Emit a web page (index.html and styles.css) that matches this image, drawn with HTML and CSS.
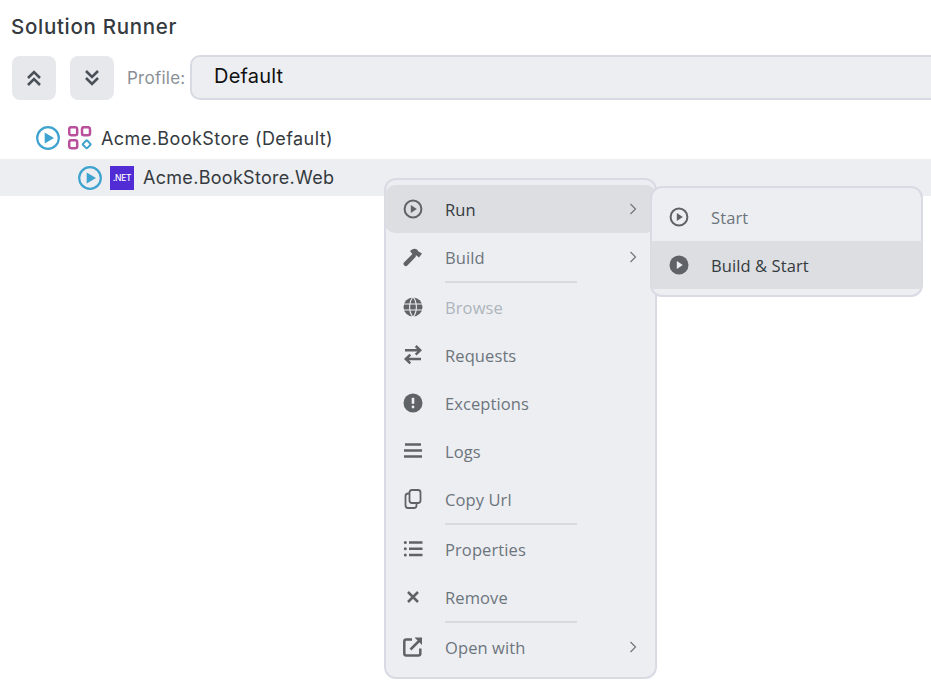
FILE: index.html
```html
<!DOCTYPE html>
<html lang="en">

<head>
    <meta charset="UTF-8">
    <meta name="viewport" content="width=device-width, initial-scale=1.0">
    <title>Solution Runner</title>
    <link rel="stylesheet" href="styles.css">
</head>

<body>

    <h1 class="title">Solution Runner</h1>

    <!-- Toolbar -->
    <div class="toolbar">
        <button class="tool-btn">
            <svg width="16" height="16" viewBox="0 0 16 16"><path d="M2 8 8 2 14 8M2 15 8 9 14 15"/></svg>
        </button>
        <button class="tool-btn">
            <svg width="16" height="16" viewBox="0 0 16 16"><path d="M2 1 8 7 14 1M2 8 8 14 14 8"/></svg>
        </button>
        <span class="profile-label">Profile:</span>
        <div class="profile-select">Default</div>
    </div>

    <!-- Tree -->
    <div class="tree">
        <div class="tree-row root">
            <svg class="run-icon" width="24" height="24" viewBox="0 0 24 24"><circle cx="12" cy="12" r="10.8"/><path d="M8.700 6.500v11L18 12z"/></svg>
            <svg class="solution-icon" width="24" height="24" viewBox="0 0 24 24">
                <rect x="1.200" y="1.200" width="8" height="8" rx="2"/>
                <rect x="14" y="1.200" width="8" height="8" rx="2"/>
                <rect x="1.200" y="14.300" width="8" height="8" rx="2"/>
                <rect class="diamond" x="15.700" y="15.300" width="6" height="6" rx="1" transform="rotate(45 18.700 18.300)"/>
            </svg>
            <span>Acme.BookStore (Default)</span>
        </div>
        <div class="tree-row child">
            <svg class="run-icon" width="24" height="24" viewBox="0 0 24 24"><circle cx="12" cy="12" r="10.8"/><path d="M8.700 6.500v11L18 12z"/></svg>
            <span class="net-badge">.NET</span>
            <span>Acme.BookStore.Web</span>
        </div>
    </div>

    <!-- Context menu -->
    <div class="menu main-menu">
        <div class="menu-item active">
            <svg class="icon" viewBox="0 0 20 20"><circle class="ring" cx="10" cy="10" r="8.400"/><path d="M7.800 6v8l6-4z"/></svg>
            <span class="label">Run</span>
            <svg class="arrow" viewBox="0 0 8 14"><path d="M1.500 2 6.500 7 1.500 12"/></svg>
        </div>
        <div class="menu-item">
            <svg class="icon" viewBox="0 0 20 20">
                <path class="handle" d="M2.800 16.800 10.500 9"/>
                <path d="M7 4Q11 .5 14 2.500L15.500 4.500 19 6.500 16 10.500 13.500 8.500H11L8.500 6z"/>
            </svg>
            <span class="label">Build</span>
            <svg class="arrow" viewBox="0 0 8 14"><path d="M1.500 2 6.500 7 1.500 12"/></svg>
        </div>
        <div class="separator"></div>
        <div class="menu-item disabled">
            <svg class="icon" viewBox="0 0 20 20">
                <circle cx="10" cy="10" r="9.500"/>
                <path class="globe-cut" d="M0 7h20M0 13h20M10 0C5.500 5 5.500 15 10 20M10 0C14.500 5 14.500 15 10 20"/>
            </svg>
            <span class="label">Browse</span>
        </div>
        <div class="menu-item">
            <svg class="icon" viewBox="0 0 20 20"><path class="line" d="M2 5.300h15M12.700 1l4.500 4.300-4.500 4.300M18 14H3M7.300 9.700 2.800 14l4.500 4.300"/></svg>
            <span class="label">Requests</span>
        </div>
        <div class="menu-item">
            <svg class="icon" viewBox="0 0 20 20">
                <circle cx="10" cy="10" r="9.500"/>
                <path class="mark-cut" d="M10 4.800v6"/>
                <circle class="dot" cx="10" cy="14" r="1.400"/>
            </svg>
            <span class="label">Exceptions</span>
        </div>
        <div class="menu-item">
            <svg class="icon" viewBox="0 0 20 20"><path class="line" d="M2 3.500h16M1 9.500h18M1 15.500h18"/></svg>
            <span class="label">Logs</span>
        </div>
        <div class="menu-item">
            <svg class="icon" viewBox="0 0 20 20">
                <path class="thin" d="M6.500 3.500Q6.500 1 9 1h6Q17.500 1 17.500 3.500v8Q17.500 14 15 14H9Q6.500 14 6.500 11.500z"/>
                <path class="thin" d="M6.500 4.500H5Q2.500 4.500 2.500 7v9Q2.500 19 5 19h6Q13.500 19 13.500 16.500V14"/>
            </svg>
            <span class="label">Copy Url</span>
        </div>
        <div class="separator"></div>
        <div class="menu-item">
            <svg class="icon" viewBox="0 0 20 20">
                <path class="line" d="M6 3.500H19.500M6 9.700H19.500M6 16H19.500"/>
                <circle cx="2.300" cy="3.500" r="1.500"/><circle cx="2.300" cy="9.700" r="1.500"/><circle cx="2.300" cy="16" r="1.500"/>
            </svg>
            <span class="label">Properties</span>
        </div>
        <div class="menu-item">
            <svg class="icon" viewBox="0 0 20 20"><path class="line" d="M5 5l10 10M15 5 5 15"/></svg>
            <span class="label">Remove</span>
        </div>
        <div class="separator"></div>
        <div class="menu-item">
            <svg class="icon" viewBox="0 0 20 20">
                <path class="line" d="M9 2.500H3.300Q1.300 2.500 1.300 4.500V16.500Q1.300 18.500 3.300 18.500H15.300Q17.300 18.500 17.300 16.500V11.500"/>
                <path class="line" d="M7.500 12.500 16 4"/>
                <path d="M11.500 .5H19V8z"/>
            </svg>
            <span class="label">Open with</span>
            <svg class="arrow" viewBox="0 0 8 14"><path d="M1.500 2 6.500 7 1.500 12"/></svg>
        </div>
    </div>

    <!-- Run submenu -->
    <div class="menu sub-menu">
        <div class="menu-item">
            <svg class="icon" viewBox="0 0 20 20"><circle class="ring" cx="10" cy="10" r="8.400"/><path d="M7.800 6v8l6-4z"/></svg>
            <span class="label">Start</span>
        </div>
        <div class="menu-item active square">
            <svg class="icon" viewBox="0 0 20 20"><circle cx="10" cy="10" r="9.500"/><path class="play-cut" d="M7.800 6v8l6-4z"/></svg>
            <span class="label">Build &amp; Start</span>
        </div>
    </div>

</body>

</html>
```

FILE: styles.css
```css
html, body {
    height: 100%;
}

body {
    margin: 0;
    background: #fff;
    overflow: hidden;
    font-family: "Inter", "Liberation Sans", sans-serif;
    color: #343a40;
}

.title {
    margin: 0;
    padding: 15px 0 0 11px;
    height: 41px;
    box-sizing: border-box;
    font-size: 20.500px;
    line-height: 24px;
    font-weight: 500;
    letter-spacing: .7px;
}

/* Toolbar */
.toolbar {
    display: flex;
    align-items: center;
    padding-left: 12px;
    margin-top: 14px;
    height: 45px;
}

.tool-btn {
    display: flex;
    align-items: center;
    justify-content: center;
    width: 44px;
    height: 44px;
    margin-right: 14px;
    padding: 0;
    border: 0;
    border-radius: 8px;
    background: #e7e8eb;
}

.tool-btn:nth-child(2) {
    margin-right: 13px;
}

.tool-btn path {
    fill: none;
    stroke: #495057;
    stroke-width: 2.600;
}

.profile-label {
    width: 63px;
    font-size: 17px;
    letter-spacing: .25px;
    color: #8b9096;
}

.profile-select {
    flex: 1;
    height: 45px;
    box-sizing: border-box;
    margin-right: -20px;
    padding-left: 22px;
    border: 2px solid #d8dae3;
    border-radius: 10px;
    background: #edeef1;
    font-size: 20px;
    letter-spacing: .2px;
    line-height: 39px;
    color: #111;
}

/* Tree */
.tree {
    margin-top: 17px;
    font-size: 18px;
}

.tree-row {
    display: flex;
    align-items: center;
}

.root {
    height: 42px;
    padding-left: 36px;
    letter-spacing: .43px;
}

.child {
    height: 37px;
    padding-left: 78px;
    background: #edeef1;
    letter-spacing: .3px;
}

.run-icon circle {
    fill: none;
    stroke: #3fa3cf;
    stroke-width: 2.200;
}

.run-icon path {
    fill: #3fa3cf;
}

.solution-icon {
    margin-left: 8px;
    margin-right: 9px;
}

.solution-icon rect {
    fill: none;
    stroke: #b8509c;
    stroke-width: 2.500;
}

.solution-icon .diamond {
    stroke: #3fa3cf;
    stroke-width: 2;
}

.net-badge {
    display: flex;
    align-items: center;
    justify-content: center;
    width: 24px;
    height: 24px;
    margin-left: 8px;
    margin-right: 9px;
    background: #512bd4;
    color: #fff;
    font-size: 8.500px;
    font-weight: 500;
    letter-spacing: -.3px;
}

/* Menus */
.menu {
    position: absolute;
    box-sizing: border-box;
    width: 273px;
    border: 2px solid #d9dae3;
    border-radius: 12px;
    background: #edeef1;
    font-family: "Open Sans", "Noto Sans", sans-serif;
    font-size: 16.500px;
    letter-spacing: .1px;
    color: #6c757d;
}

.main-menu {
    left: 384px;
    top: 178px;
    height: 501px;
    padding-top: 5px;
}

.sub-menu {
    left: 650px;
    top: 186px;
    height: 111px;
    padding-top: 5px;
}

.menu-item {
    display: flex;
    align-items: center;
    height: 48px;
    margin: 0 -1px;
    padding-left: 18px;
}

.menu-item.active {
    background: #dddee1;
    color: #343a40;
    border-radius: 10px;
}

.menu-item.square {
    border-radius: 0;
}

.menu-item.disabled {
    color: #adb5bd;
}

.icon {
    width: 20px;
    height: 20px;
    margin-right: 22px;
    flex: none;
    fill: #5f6368;
}

.icon .ring {
    fill: none;
    stroke: #5f6368;
    stroke-width: 2;
}

.icon .line {
    fill: none;
    stroke: #5f6368;
    stroke-width: 2.500;
}

.icon .thin {
    fill: none;
    stroke: #5f6368;
    stroke-width: 1.800;
}

.icon .handle {
    fill: none;
    stroke: #5f6368;
    stroke-width: 4.500;
    stroke-linecap: round;
}

.icon .globe-cut {
    fill: none;
    stroke: #edeef1;
    stroke-width: 1.100;
}

.icon .mark-cut {
    fill: none;
    stroke: #edeef1;
    stroke-width: 2.600;
}

.icon .dot,
.icon .play-cut {
    fill: #edeef1;
}

.label {
    flex: 1;
    padding-top: 1px;
}

.arrow {
    width: 8px;
    height: 14px;
    margin-right: 19px;
    fill: none;
    stroke: #6c757d;
    stroke-width: 1.200;
}

.separator {
    width: 132px;
    height: 2px;
    margin-left: 59px;
    background: #d9dadd;
}
```
